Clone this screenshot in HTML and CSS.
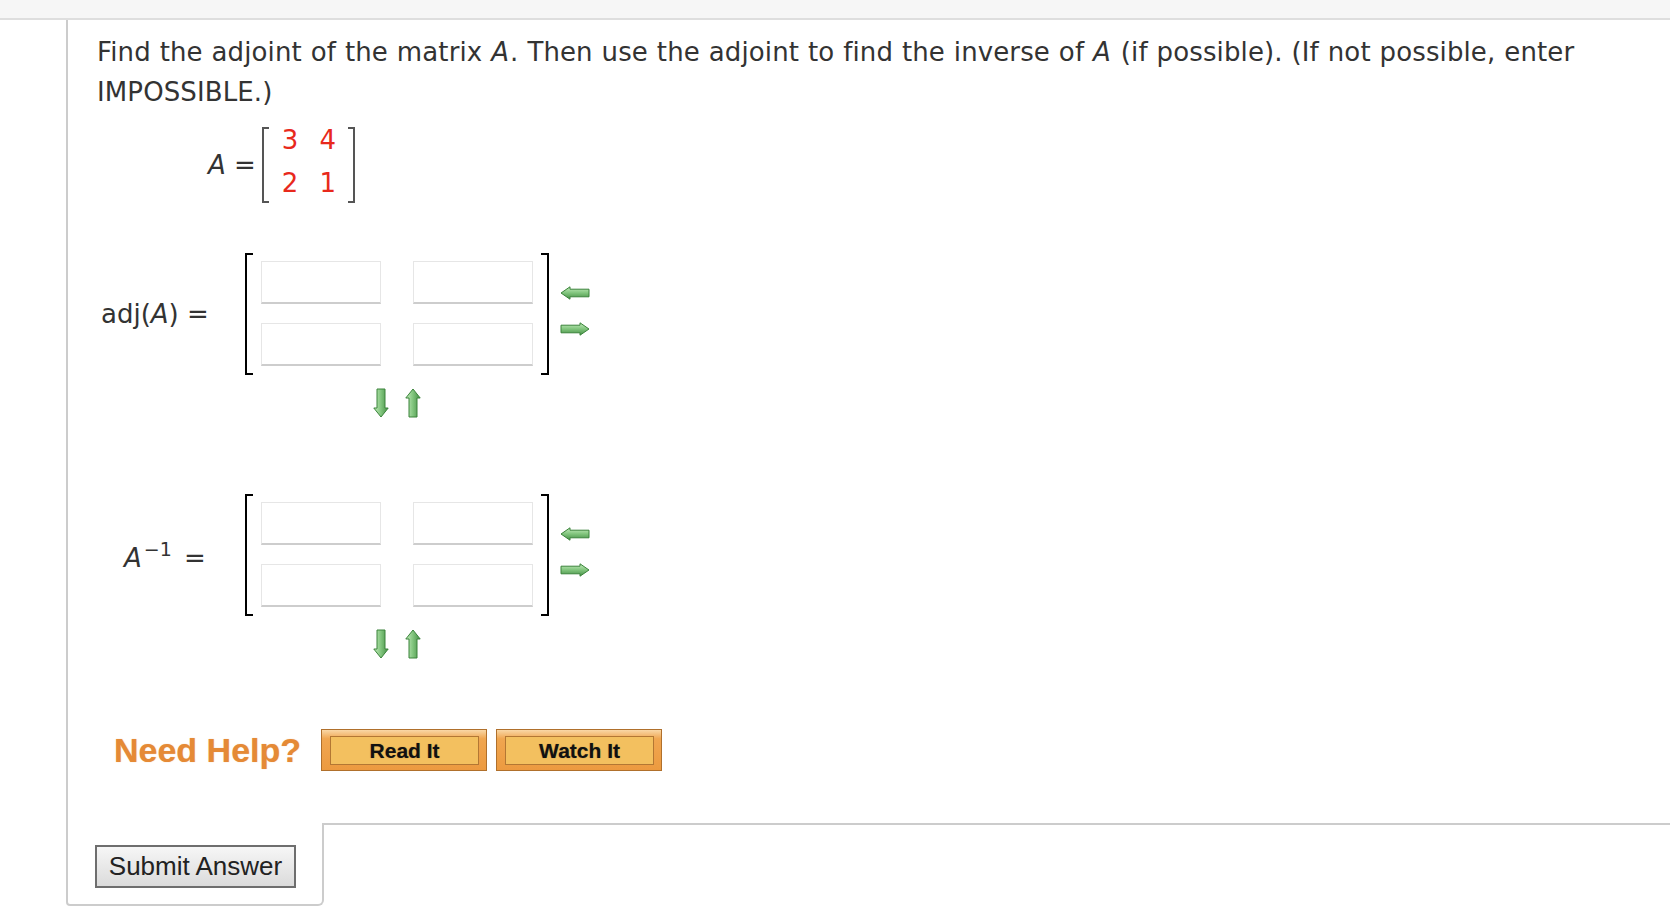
FILE: index.html
```html
<!DOCTYPE html>
<html lang="en">
<head>
<meta charset="utf-8">
<title>Adjoint of a matrix</title>
<link rel="stylesheet" href="styles.css">
</head>
<body>
<svg class="defs" width="0" height="0" aria-hidden="true">
  <defs>
    <linearGradient id="gh" x1="0" y1="0" x2="0" y2="1">
      <stop offset="0" stop-color="#c4ecbd"/>
      <stop offset="0.5" stop-color="#80c47c"/>
      <stop offset="1" stop-color="#468f46"/>
    </linearGradient>
    <linearGradient id="gv" x1="0" y1="0" x2="1" y2="0">
      <stop offset="0" stop-color="#c4ecbd"/>
      <stop offset="0.5" stop-color="#80c47c"/>
      <stop offset="1" stop-color="#468f46"/>
    </linearGradient>
  </defs>
</svg>
<div class="topbar"></div>
<div class="question">
  <div class="qbody">
    <p class="prompt">Find the adjoint of the matrix <i>A</i>. Then use the adjoint to find the inverse of <i>A</i> (if possible). (If not possible, enter IMPOSSIBLE.)</p>

    <div class="given">
      <span class="given-label"><i>A</i> =</span>
      <div class="mat-a">
        <span>3</span><span>4</span>
        <span>2</span><span>1</span>
      </div>
    </div>

    <div class="answer">
      <div class="label">adj(<i>A</i>) =</div>
      <div class="mat-col">
        <div class="bmat">
          <input class="cell" type="text">
          <input class="cell" type="text">
          <input class="cell" type="text">
          <input class="cell" type="text">
        </div>
        <div class="vert-arrows">
          <svg width="16" height="30" viewBox="0 0 16 30"><path d="M8 29 L0.8 20 L4 20 L4 1 L12 1 L12 20 L15.2 20 Z" fill="url(#gv)" stroke="#3a833a" stroke-width="1"/></svg>
          <svg width="16" height="30" viewBox="0 0 16 30"><path d="M8 1 L0.8 10 L4 10 L4 29 L12 29 L12 10 L15.2 10 Z" fill="url(#gv)" stroke="#3a833a" stroke-width="1"/></svg>
        </div>
      </div>
      <div class="side-arrows">
        <svg width="30" height="14" viewBox="0 0 30 14"><path d="M1 7 L10 0.8 L10 3.2 L29 3.2 L29 10.8 L10 10.8 L10 13.2 Z" fill="url(#gh)" stroke="#3a833a" stroke-width="1"/></svg>
        <svg width="30" height="14" viewBox="0 0 30 14"><path d="M29 7 L20 0.8 L20 3.2 L1 3.2 L1 10.8 L20 10.8 L20 13.2 Z" fill="url(#gh)" stroke="#3a833a" stroke-width="1"/></svg>
      </div>
    </div>

    <div class="answer answer-inv">
      <div class="label"><span><i>A</i><span class="sup">&minus;1</span> =</span></div>
      <div class="mat-col">
        <div class="bmat">
          <input class="cell" type="text">
          <input class="cell" type="text">
          <input class="cell" type="text">
          <input class="cell" type="text">
        </div>
        <div class="vert-arrows">
          <svg width="16" height="30" viewBox="0 0 16 30"><path d="M8 29 L0.8 20 L4 20 L4 1 L12 1 L12 20 L15.2 20 Z" fill="url(#gv)" stroke="#3a833a" stroke-width="1"/></svg>
          <svg width="16" height="30" viewBox="0 0 16 30"><path d="M8 1 L0.8 10 L4 10 L4 29 L12 29 L12 10 L15.2 10 Z" fill="url(#gv)" stroke="#3a833a" stroke-width="1"/></svg>
        </div>
      </div>
      <div class="side-arrows">
        <svg width="30" height="14" viewBox="0 0 30 14"><path d="M1 7 L10 0.8 L10 3.2 L29 3.2 L29 10.8 L10 10.8 L10 13.2 Z" fill="url(#gh)" stroke="#3a833a" stroke-width="1"/></svg>
        <svg width="30" height="14" viewBox="0 0 30 14"><path d="M29 7 L20 0.8 L20 3.2 L1 3.2 L1 10.8 L20 10.8 L20 13.2 Z" fill="url(#gh)" stroke="#3a833a" stroke-width="1"/></svg>
      </div>
    </div>

    <div class="help">
      <span class="need">Need Help?</span>
      <button class="helpbtn" type="button"><span>Read It</span></button>
      <button class="helpbtn" type="button"><span>Watch It</span></button>
    </div>
  </div>
  <div class="footer">
    <div class="submit-cell"><button class="submit" type="button">Submit Answer</button></div>
    <div class="footer-rest"></div>
  </div>
</div>
</body>
</html>
```

FILE: styles.css
```css
* { box-sizing: border-box; }
html, body { margin: 0; padding: 0; background: #fff; }
body {
  font-family: "DejaVu Sans", Verdana, sans-serif;
  font-size: 26px;
  color: #333;
}
.defs { display: block; width: 0; height: 0; overflow: hidden; }

.topbar {
  height: 20px;
  background: #f6f6f6;
  border-bottom: 2px solid #dedede;
}

.question { margin-left: 66px; }
.qbody {
  border-left: 2px solid #cccccc;
  padding: 12px 20px 52px 29px;
}

.prompt {
  margin: 0;
  line-height: 40px;
  letter-spacing: 0.12px;
  word-spacing: 0.5px;
}
.prompt i { padding-right: 1px; }

.given {
  display: flex;
  align-items: center;
  margin: 15px 0 0 111px;
}
.given-label { line-height: 26px; margin-right: 6px; }
.mat-a {
  display: grid;
  grid-template-columns: auto auto;
  column-gap: 21px;
  row-gap: 17px;
  line-height: 26px;
  padding: 0 17px 7px 18px;
  color: #e8291c;
  border-left: 2px solid #555;
  border-right: 2px solid #555;
  background:
    linear-gradient(#555, #555) left top / 5px 2px no-repeat,
    linear-gradient(#555, #555) left bottom / 5px 2px no-repeat,
    linear-gradient(#555, #555) right top / 5px 2px no-repeat,
    linear-gradient(#555, #555) right bottom / 5px 2px no-repeat;
}

.answer {
  display: flex;
  align-items: flex-start;
  margin-top: 50px;
}
.answer-inv { margin-top: 76px; }
.label {
  width: 148px;
  height: 122px;
  display: flex;
  align-items: center;
  padding-left: 4px;
}
.answer-inv .label { padding-left: 27px; }
.sup {
  font-size: 19px;
  vertical-align: 11px;
  margin: 0 4px 0 2px;
}

.mat-col { display: flex; flex-direction: column; }
.bmat {
  display: grid;
  grid-template-columns: 120px 120px;
  column-gap: 32px;
  row-gap: 19px;
  padding: 8px 14px 9px;
  border-left: 2px solid #000;
  border-right: 2px solid #000;
  background:
    linear-gradient(#000, #000) left top / 6px 2px no-repeat,
    linear-gradient(#000, #000) left bottom / 6px 2px no-repeat,
    linear-gradient(#000, #000) right top / 6px 2px no-repeat,
    linear-gradient(#000, #000) right bottom / 6px 2px no-repeat;
}
.cell {
  display: block;
  width: 120px;
  height: 43px;
  margin: 0;
  padding: 0;
  border: 1px solid #e6e6e6;
  border-bottom: 2px solid #cdcdcd;
  background: #fff;
  font: 20px "DejaVu Sans", sans-serif;
}
.vert-arrows {
  display: flex;
  justify-content: center;
  gap: 16px;
  margin-top: 13px;
}
.vert-arrows svg, .side-arrows svg { display: block; }
.side-arrows {
  display: flex;
  flex-direction: column;
  gap: 22px;
  margin: 33px 0 0 11px;
}

.help {
  display: flex;
  align-items: center;
  margin-top: 70px;
  padding-left: 17px;
}
.need {
  font-family: "Liberation Sans", Arial, sans-serif;
  font-weight: bold;
  font-size: 34px;
  color: #e58a36;
  text-shadow: 0 0 1px rgba(229, 138, 54, 0.6);
  margin-right: 20px;
}
.helpbtn {
  width: 166px;
  height: 42px;
  margin: 0 9px 0 0;
  padding: 6px 7px 5px 8px;
  border: 1px solid #b0702c;
  background: linear-gradient(#f9d7a6, #f0a650 22%, #ec9a40);
  font: bold 21px "Liberation Sans", Arial, sans-serif;
  color: #111;
  cursor: pointer;
}
.helpbtn span {
  display: flex;
  align-items: center;
  justify-content: center;
  height: 100%;
  border: 1px solid #b37733;
  background: #f3c05f;
  text-shadow: 0 0 1px rgba(0, 0, 0, 0.4);
}

.footer { display: flex; }
.submit-cell {
  width: 258px;
  padding: 22px 26px 16px 27px;
  border-left: 2px solid #cccccc;
  border-right: 2px solid #cccccc;
  border-bottom: 2px solid #cccccc;
  border-bottom-left-radius: 4px;
  border-bottom-right-radius: 6px;
}
.footer-rest {
  flex: 1;
  border-top: 2px solid #cccccc;
}
.submit {
  display: block;
  width: 201px;
  height: 43px;
  margin: 0;
  padding: 0;
  border: 2px solid #6e6e6e;
  background: linear-gradient(#f6f6f6, #dbdbdb);
  font: 26px "Liberation Sans", Arial, sans-serif;
  color: #222;
}
```
